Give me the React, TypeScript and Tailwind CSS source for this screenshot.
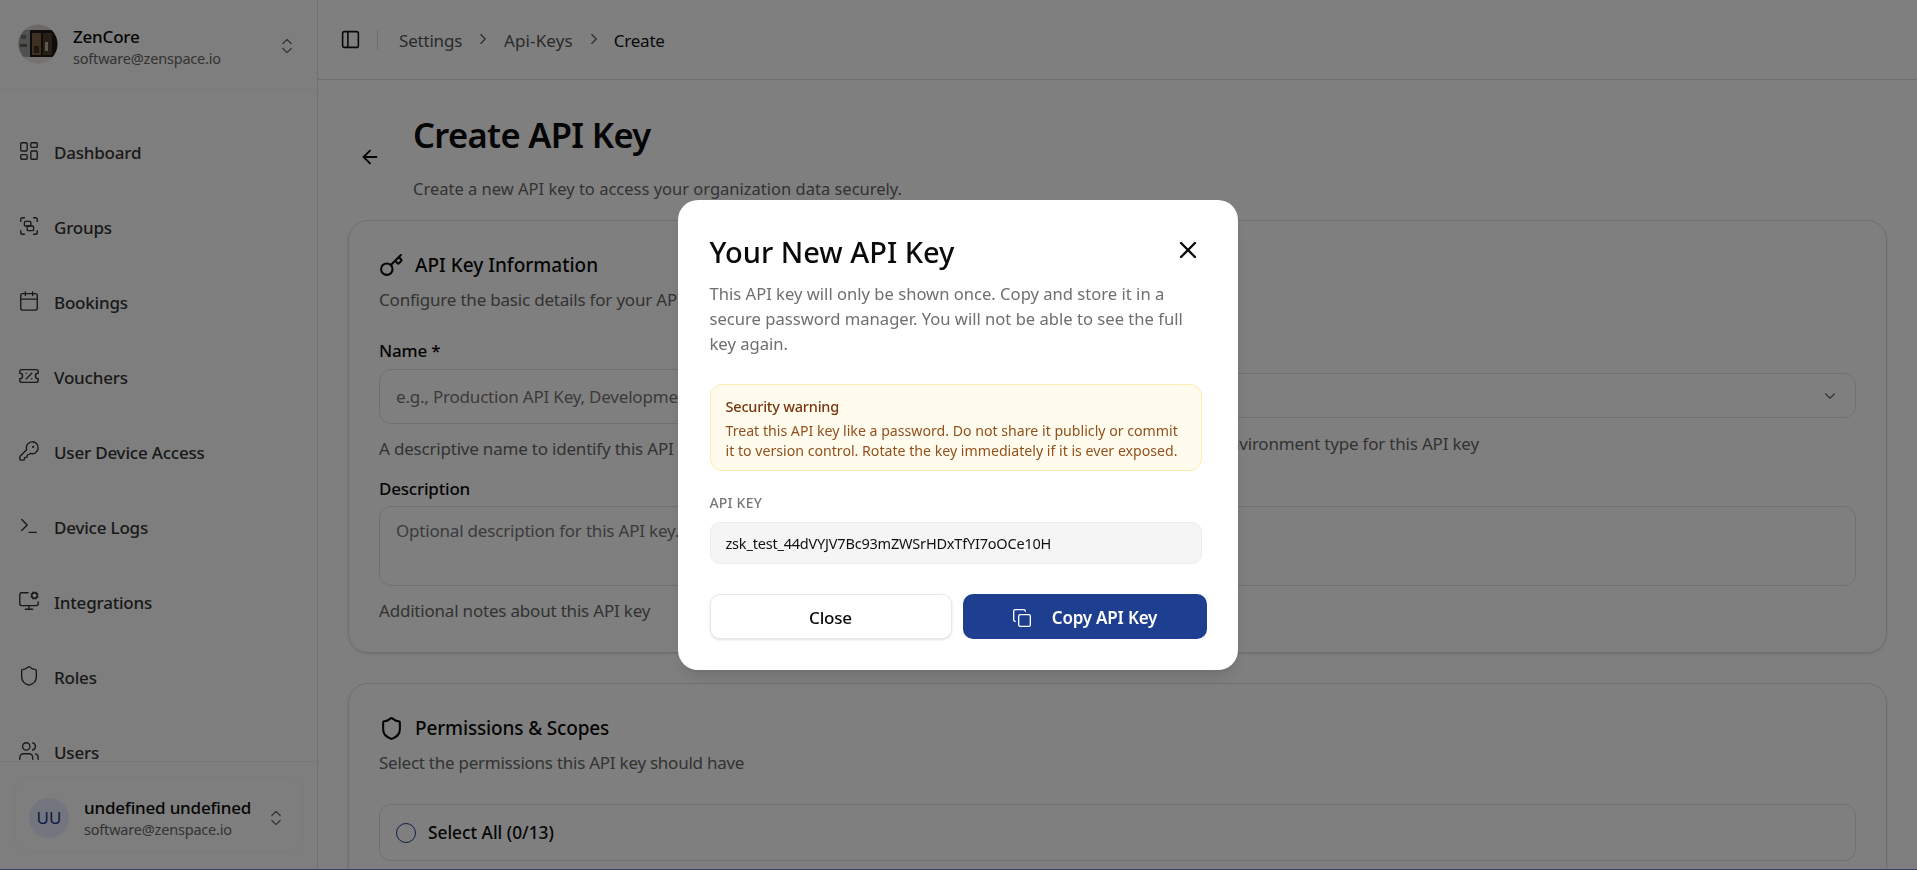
import React from "react";
import {
  ArrowLeft,
  Calendar,
  ChevronDown,
  ChevronRight,
  ChevronsUpDown,
  Copy,
  Group,
  Key,
  KeyRound,
  LayoutDashboard,
  MonitorCog,
  PanelLeft,
  Shield,
  Terminal,
  TicketPercent,
  Users,
  X,
} from "lucide-react";

const nav = [
  { label: "Dashboard", icon: LayoutDashboard },
  { label: "Groups", icon: Group },
  { label: "Bookings", icon: Calendar },
  { label: "Vouchers", icon: TicketPercent },
  { label: "User Device Access", icon: KeyRound },
  { label: "Device Logs", icon: Terminal },
  { label: "Integrations", icon: MonitorCog },
  { label: "Roles", icon: Shield },
  { label: "Users", icon: Users },
];

function Logo() {
  return (
    <svg width="40" height="40" viewBox="0 0 40 40" className="shrink-0 -mt-[2px]">
      <defs>
        <clipPath id="logo-clip">
          <circle cx="20" cy="20" r="19.5" />
        </clipPath>
      </defs>
      <g clipPath="url(#logo-clip)">
        <rect width="40" height="40" fill="#d8d4ce" />
        <rect x="0" y="6" width="12" height="27" fill="#a3a3a0" />
        <rect x="3" y="11" width="5" height="4" fill="#6d6d6a" />
        <rect x="2" y="20" width="7" height="3" fill="#5f5f5c" />
        <rect x="12" y="6" width="28" height="27" fill="#1e1a16" />
        <rect x="14" y="9" width="9" height="22" fill="#7d6342" />
        <rect x="25" y="9" width="9" height="22" fill="#4c3f31" />
        <rect x="27" y="18" width="3" height="9" fill="#bfae93" />
        <rect x="16" y="22" width="5" height="7" fill="#3a3026" />
        <rect x="0" y="33" width="40" height="7" fill="#ece8e2" />
      </g>
    </svg>
  );
}

function Sidebar() {
  return (
    <aside className="w-[318px] shrink-0 h-full flex flex-col border-r border-[#e2e2e2] bg-[#fdfdfd]">
      <div className="h-[90px] shrink-0 flex items-center pl-[18px] pr-[20px] border-b border-[#f2f2f2]">
        <Logo />
        <div className="ml-[15px] flex-1 min-w-0 mt-[4px]">
          <div className="text-[17px] leading-[22px] font-medium text-[#0a0a0a] tracking-[-0.2px]">ZenCore</div>
          <div className="text-[14.5px] leading-[20px] text-[#666] tracking-[-0.2px]">software@zenspace.io</div>
        </div>
        <ChevronsUpDown size={20} strokeWidth={1.5} className="text-[#666] mt-[2px]" />
      </div>
      <nav className="flex-1 min-h-0 overflow-hidden pt-[25px] px-[18px]">
        {nav.map((n) => (
          <div key={n.label} className="h-[75px] flex items-center gap-[14px] text-[#333]">
            <n.icon size={22} strokeWidth={1.5} className="shrink-0 -mt-1" />
            <span className="text-[17px] font-medium tracking-[-0.2px]">{n.label}</span>
          </div>
        ))}
      </nav>
      <div className="h-[108px] shrink-0 border-t border-[#f0f0f0] pt-[15px] px-[14px]">
        <div className="h-[75px] rounded-[14px] border border-[#f5f5f5] flex items-center pl-[14px] pr-[16px] pt-[6px]">
          <div className="w-[40px] h-[40px] rounded-full bg-[#e6ebff] flex items-center justify-center text-[17px] text-[#1e3a8a] shrink-0">
            UU
          </div>
          <div className="ml-[15px] flex-1 min-w-0">
            <div className="text-[17px] leading-[22px] font-medium text-[#0a0a0a] tracking-[-0.2px] whitespace-nowrap">undefined undefined</div>
            <div className="text-[14.5px] leading-[20px] text-[#666] tracking-[-0.2px]">software@zenspace.io</div>
          </div>
          <ChevronsUpDown size={20} strokeWidth={1.5} className="text-[#666] shrink-0" />
        </div>
      </div>
    </aside>
  );
}

function Topbar() {
  return (
    <header className="h-[80px] shrink-0 border-b border-[#dedede] flex items-center pl-[22px] pt-[2px] text-[17px] tracking-[-0.2px]">
      <PanelLeft size={21} strokeWidth={1.8} className="text-[#111] -mt-[2px]" />
      <div className="w-px h-[20px] bg-[#d8d8d8] ml-[16px] mr-[21px] -mt-[2px]" />
      <span className="text-[#555]">Settings</span>
      <ChevronRight size={18} strokeWidth={1.5} className="text-[#555] mx-[12px] -mt-1" />
      <span className="text-[#555] tracking-[0.1px]">Api-Keys</span>
      <ChevronRight size={18} strokeWidth={1.5} className="text-[#555] ml-[12px] mr-[11px] -mt-1" />
      <span className="text-[#111]">Create</span>
    </header>
  );
}

function Field({ label, help, children }: { label: string; help: string; children: React.ReactNode }) {
  return (
    <div>
      <div className="text-[17px] leading-[24px] font-medium text-[#0a0a0a] tracking-[-0.2px]">{label}</div>
      {children}
      <div className="text-[17px] leading-[24px] text-[#666] tracking-[-0.2px] mt-[13px]">{help}</div>
    </div>
  );
}

function Content() {
  return (
    <div className="flex-1 min-h-0 overflow-hidden pl-[30px] pr-[30px] pt-[16px]">
      <div className="flex items-center h-[120px] mb-[4px]">
        <ArrowLeft size={22} strokeWidth={2} className="text-[#0a0a0a] ml-[11px] mt-[1px]" />
        <div className="ml-[32px] -mt-[2px]">
          <h1 className="text-[34.5px] leading-[50px] font-semibold text-[#0a0a0a] tracking-[-0.65px]">Create API Key</h1>
          <p className="text-[16.5px] leading-[24px] text-[#666] mt-[17px]">
            Create a new API key to access your organization data securely.
          </p>
        </div>
      </div>

      <section className="rounded-[20px] border border-[#dedede] shadow-sm h-[433px] p-[30px] pt-[31px]">
        <div className="flex items-center gap-[11px] h-[26px]">
          <Key size={25} strokeWidth={2} className="text-[#0a0a0a]" />
          <h2 className="text-[19px] font-medium text-[#0a0a0a]">API Key Information</h2>
        </div>
        <p className="text-[17px] leading-[24px] text-[#666] tracking-[-0.2px] mt-[10px]">
          Configure the basic details for your API key
        </p>
        <div className="grid grid-cols-2 gap-x-[44px] mt-[27px]">
          <Field label="Name *" help="A descriptive name to identify this API key">
            <div className="h-[55px] mt-[6px] rounded-[12px] border border-[#e0e0e0] flex items-center px-[16px] text-[17px] text-[#777] tracking-[-0.2px] overflow-hidden whitespace-nowrap">
              e.g., Production API Key, Development Key
            </div>
          </Field>
          <div>
            <div className="text-[17px] leading-[24px] font-medium text-[#0a0a0a] tracking-[-0.2px]">Type</div>
            <div className="h-[45px] mt-[10px] rounded-[12px] border border-[#e0e0e0] flex items-center justify-between pl-[16px] pr-[16px] text-[17px] text-[#111]">
              <span>Test</span>
              <ChevronDown size={18} strokeWidth={1.5} className="text-[#666]" />
            </div>
            <div className="text-[17px] leading-[24px] text-[#666] tracking-[-0.2px] mt-[14px]">
              Select the environment type for this API key
            </div>
          </div>
        </div>
        <div className="mt-[16px]">
          <Field label="Description" help="Additional notes about this API key">
            <div className="h-[80px] mt-[5px] rounded-[12px] border border-[#e0e0e0] px-[16px] py-[10px] text-[17px] leading-[28px] text-[#777] tracking-[-0.2px]">
              Optional description for this API key...
            </div>
          </Field>
        </div>
      </section>

      <section className="rounded-[20px] border border-[#dedede] shadow-sm mt-[30px] p-[30px] pt-[31px]">
        <div className="flex items-center gap-[11px] h-[26px]">
          <Shield size={25} strokeWidth={2} className="text-[#0a0a0a]" />
          <h2 className="text-[19px] font-medium text-[#0a0a0a] tracking-[-0.15px]">Permissions &amp; Scopes</h2>
        </div>
        <p className="text-[17px] leading-[24px] text-[#666] tracking-[-0.25px] mt-[10px]">
          Select the permissions this API key should have
        </p>
        <div className="h-[57px] mt-[29px] rounded-[12px] border border-[#e0e0e0] flex items-center pl-[16px] pt-px">
          <span className="w-[20px] h-[20px] rounded-full border border-[#1e3a8a] shrink-0" />
          <span className="ml-[12px] text-[17.3px] font-medium text-[#0a0a0a]">Select All (0/13)</span>
        </div>
      </section>
    </div>
  );
}

function Modal() {
  return (
    <div className="fixed inset-0 bg-black/50 flex items-center justify-center">
      <div className="relative w-[560px] h-[470px] mr-[2px] bg-white rounded-[20px] shadow-lg pl-[32px] pt-[32px]">
        <button className="absolute right-[36px] top-[36px] text-[#0a0a0a]">
          <X size={28} strokeWidth={2} />
        </button>
        <h3 className="text-[29px] leading-[40px] font-medium text-[#0a0a0a]">Your New API Key</h3>
        <p className="w-[480px] mt-[9px] text-[16.6px] leading-[25px] text-[#6f6f6f]">
          This API key will only be shown once. Copy and store it in a secure password manager. You will not be able to see the full key again.
        </p>
        <div className="w-[492px] h-[87px] mt-[28px] rounded-[12px] bg-[#fffcee] border border-[#fcecb0] pl-[15px] pr-[20px] pt-[11px]">
          <div className="text-[14.5px] leading-[20px] font-medium text-[#78350f] tracking-[-0.2px]">Security warning</div>
          <div className="text-[14.15px] leading-[20px] text-[#92501e] mt-[5px]">
            Treat this API key like a password. Do not share it publicly or commit it to version control. Rotate the key immediately if it is ever exposed.
          </div>
        </div>
        <div className="mt-[22px] text-[14px] leading-[20px] font-medium text-[#777] tracking-[0.2px]">API KEY</div>
        <div className="w-[492px] h-[42px] mt-[9px] rounded-[10px] bg-[#f5f5f5] border border-[#ebebeb] flex items-center px-[15px] pt-px text-[14.5px] text-[#111] tracking-[-0.2px]">
          zsk_test_44dVYJV7Bc93mZWSrHDxTfYI7oOCe10H
        </div>
        <div className="w-[497px] mt-[30px] flex gap-[11px]">
          <button className="w-[242px] h-[45px] rounded-[10px] bg-white border border-[#e8e8e8] shadow-sm text-[17px] font-medium text-[#0a0a0a] tracking-[-0.2px] pt-[2px]">
            Close
          </button>
          <button className="flex-1 h-[45px] rounded-[10px] bg-[#1e3f8f] flex items-center justify-center gap-[20px] text-[17px] font-semibold text-white tracking-[-0.2px] pt-[2px]">
            <Copy size={20} strokeWidth={1.6} />
            Copy API Key
          </button>
        </div>
      </div>
    </div>
  );
}

export default function App() {
  return (
    <div className="h-screen w-full overflow-hidden flex flex-col bg-white font-['Noto_Sans','Open_Sans',sans-serif]">
      <div className="flex-1 min-h-0 flex">
        <Sidebar />
        <main className="flex-1 min-w-0 h-full flex flex-col">
          <Topbar />
          <Content />
        </main>
      </div>
      <div className="h-px shrink-0 bg-[#7088d8]" />
      <Modal />
    </div>
  );
}
